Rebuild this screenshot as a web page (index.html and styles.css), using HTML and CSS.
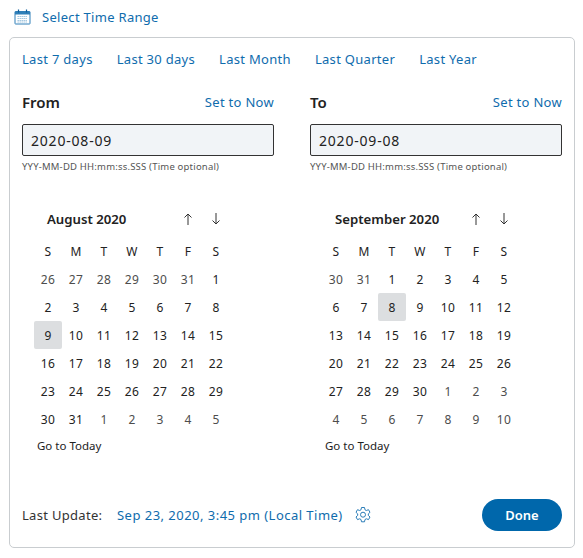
FILE: index.html
```html
<!DOCTYPE html>
<html>
<head>
    <meta charset="utf-8">
    <title>Select Time Range</title>
    <link rel="stylesheet" href="styles.css">
</head>
<body>
    <div class="trigger">
        <svg class="calIcon" width="17" height="16" viewBox="0 0 17 16">
            <rect x="1" y="2.5" width="15" height="12.5" rx="0.5" fill="none" stroke="#2f7fb8"/>
            <rect x="1" y="2.5" width="15" height="3" fill="#2f7fb8"/>
            <path d="M4.5 0.5v3M12.5 0.5v3" stroke="#0f5f9c" stroke-width="1.2"/>
            <path d="M3.5 7.5h10M3.5 9.5h10M3.5 11.5h10M3.5 13h10" stroke="#9cc3de" stroke-dasharray="1.4 0.6"/>
        </svg>
        <a class="link">Select Time Range</a>
    </div>

    <div class="panel">
        <div class="presets">
            <a class="link">Last 7 days</a>
            <a class="link">Last 30 days</a>
            <a class="link">Last Month</a>
            <a class="link">Last Quarter</a>
            <a class="link">Last Year</a>
        </div>

        <div class="columns">
            <div class="column">
                <div class="fieldHead">
                    <label class="fieldLabel">From</label>
                    <a class="link">Set to Now</a>
                </div>
                <input class="dateInput" type="text" value="2020-08-09">
                <div class="hint">YYY-MM-DD HH:mm:ss.SSS (Time optional)</div>

                <div class="calHead">
                    <div class="monthName">August 2020</div>
                    <div class="arrows"><span>
                        <svg width="10" height="12" viewBox="0 0 10 12"><path d="M5 12V1M1.5 4.5L5 1l3.500 3.500" fill="none" stroke="#333"/></svg>
                    </span><span>
                        <svg width="10" height="12" viewBox="0 0 10 12"><path d="M5 0v11M1.500 7.500L5 11l3.500-3.500" fill="none" stroke="#333"/></svg>
                    </span></div>
                </div>
                <div class="month">
                    <b>S</b><b>M</b><b>T</b><b>W</b><b>T</b><b>F</b><b>S</b>
                    <i>26</i><i>27</i><i>28</i><i>29</i><i>30</i><i>31</i><span>1</span>
                    <span>2</span><span>3</span><span>4</span><span>5</span><span>6</span><span>7</span><span>8</span>
                    <span class="selected">9</span><span>10</span><span>11</span><span>12</span><span>13</span><span>14</span><span>15</span>
                    <span>16</span><span>17</span><span>18</span><span>19</span><span>20</span><span>21</span><span>22</span>
                    <span>23</span><span>24</span><span>25</span><span>26</span><span>27</span><span>28</span><span>29</span>
                    <span>30</span><span>31</span><i>1</i><i>2</i><i>3</i><i>4</i><i>5</i>
                </div>
                <div class="today">Go to Today</div>
            </div>

            <div class="column">
                <div class="fieldHead">
                    <label class="fieldLabel">To</label>
                    <a class="link">Set to Now</a>
                </div>
                <input class="dateInput" type="text" value="2020-09-08">
                <div class="hint">YYY-MM-DD HH:mm:ss.SSS (Time optional)</div>

                <div class="calHead">
                    <div class="monthName">September 2020</div>
                    <div class="arrows"><span>
                        <svg width="10" height="12" viewBox="0 0 10 12"><path d="M5 12V1M1.5 4.5L5 1l3.500 3.500" fill="none" stroke="#333"/></svg>
                    </span><span>
                        <svg width="10" height="12" viewBox="0 0 10 12"><path d="M5 0v11M1.500 7.500L5 11l3.500-3.500" fill="none" stroke="#333"/></svg>
                    </span></div>
                </div>
                <div class="month">
                    <b>S</b><b>M</b><b>T</b><b>W</b><b>T</b><b>F</b><b>S</b>
                    <i>30</i><i>31</i><span>1</span><span>2</span><span>3</span><span>4</span><span>5</span>
                    <span>6</span><span>7</span><span class="selected">8</span><span>9</span><span>10</span><span>11</span><span>12</span>
                    <span>13</span><span>14</span><span>15</span><span>16</span><span>17</span><span>18</span><span>19</span>
                    <span>20</span><span>21</span><span>22</span><span>23</span><span>24</span><span>25</span><span>26</span>
                    <span>27</span><span>28</span><span>29</span><span>30</span><i>1</i><i>2</i><i>3</i>
                    <i>4</i><i>5</i><i>6</i><i>7</i><i>8</i><i>9</i><i>10</i>
                </div>
                <div class="today">Go to Today</div>
            </div>
        </div>

        <div class="footer">
            <span class="updateLabel">Last Update:</span>
            <a class="link updateTime">Sep 23, 2020, 3:45 pm (Local Time)</a>
            <svg class="gear" width="18" height="18" viewBox="0 0 18 18">
                <path d="M7.500 1.500h3l.5 2.300 1.300.7 2.200-.8 1.500 2.600-1.700 1.600v1.500l1.700 1.600-1.500 2.600-2.200-.8-1.300.7-.5 2.300h-3L7 13.500l-1.300-.7-2.200.8L2 11l1.700-1.600V7.900L2 6.300l1.500-2.600 2.200.8L7 3.800z" fill="none" stroke="#2a7db8" stroke-linejoin="round"/>
                <circle cx="9" cy="8.700" r="2.500" fill="none" stroke="#2a7db8"/>
            </svg>
            <button class="doneBtn">Done</button>
        </div>
    </div>
</body>
</html>
```

FILE: styles.css
```css
body {
    margin: 0;
    width: 583px;
    height: 558px;
    overflow: hidden;
    background-color: white;
    font-family: "Noto Sans", sans-serif;
    font-size: 13px;
    color: #222;
}

.link {
    color: #0f6cad;
    letter-spacing: 0.3px;
    line-height: 18px;
}

.trigger {
    display: flex;
    align-items: center;
    gap: 11px;
    height: 18px;
    padding: 8px 0 0 14px;
}

.panel {
    box-sizing: border-box;
    width: 566px;
    height: 511px;
    margin: 11px 0 0 9px;
    padding: 12px 12px 0;
    border: 1px solid #c9cdd0;
    border-radius: 5px;
}

.presets {
    display: flex;
    gap: 24px;
    height: 18px;
}

.columns {
    display: flex;
    gap: 36px;
    margin-top: 25px;
}

.column {
    width: 252px;
}

.fieldHead {
    display: flex;
    justify-content: space-between;
    height: 30px;
}

.fieldLabel {
    font-size: 15px;
    font-weight: 600;
    line-height: 18px;
}

.dateInput {
    display: block;
    box-sizing: border-box;
    width: 252px;
    height: 32px;
    margin-top: 1px;
    padding: 0 8px;
    border: 1px solid #333;
    border-radius: 2px;
    background-color: #f1f4f7;
    font-family: inherit;
    font-size: 14px;
    letter-spacing: 0.8px;
    color: #222;
}

.hint {
    margin-top: 4px;
    font-size: 9.500px;
    letter-spacing: 0.2px;
    line-height: 13px;
    color: #555;
}

.calHead {
    display: flex;
    align-items: center;
    height: 28px;
    margin: 32px 0 0 12px;
}

.monthName {
    width: 140px;
    padding-left: 13px;
    box-sizing: border-box;
    font-size: 13.200px;
    font-weight: 600;
}

.arrows {
    display: flex;
}

.arrows span {
    display: flex;
    justify-content: center;
    width: 28px;
}

.month {
    display: grid;
    grid-template-columns: repeat(7, 28px);
    grid-auto-rows: 28px;
    margin: 4px 0 0 12px;
    font-size: 12px;
    letter-spacing: 0.3px;
}

.month b,
.month i,
.month span {
    display: flex;
    align-items: center;
    justify-content: center;
    font-style: normal;
    font-weight: 400;
}

.month i {
    color: #4d4d4d;
}

.month .selected {
    border-radius: 2px;
    background-color: #dcdee0;
}

.today {
    margin: 5px 0 0 15px;
    font-size: 11.500px;
    line-height: 16px;
}

.footer {
    display: flex;
    align-items: center;
    height: 32px;
    margin-top: 45px;
}

.updateLabel {
    width: 95px;
    color: #333;
    letter-spacing: 0.3px;
}

.updateTime {
    letter-spacing: 0.47px;
}

.gear {
    margin-left: 11px;
}

.doneBtn {
    width: 80px;
    height: 32px;
    margin-left: auto;
    border: none;
    border-radius: 16px;
    background-color: #0067ab;
    color: white;
    font-family: inherit;
    font-size: 13px;
    font-weight: 600;
}
```
